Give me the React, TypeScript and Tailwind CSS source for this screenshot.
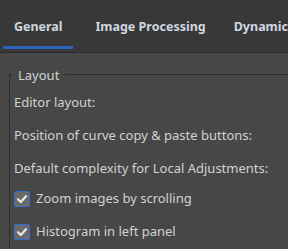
export default function App() {
  const font = { fontFamily: '"Noto Sans", "Open Sans", sans-serif' }
  return (
    <div className="w-[288px] h-[249px] overflow-hidden bg-[#474747] text-[13px] text-[#d2d2d2]" style={font}>
      {/* Tabs */}
      <div className="h-[53px] bg-[#383838] border-b border-[#2c2c2c] text-[12.5px] font-bold text-[#cfd6e0]">
        <div className="flex h-full pt-[5px] pb-[3px]">
          <div className="relative w-[73px] ml-[3px] flex items-center justify-center">
            General
            <div className="absolute left-0 right-0 bottom-0 h-[3px] bg-[#2a62c0]" />
          </div>
          <div className="ml-[22px] flex items-center whitespace-nowrap">Image Processing</div>
          <div className="ml-[28px] flex items-center whitespace-nowrap">Dynamic</div>
        </div>
      </div>

      {/* Layout frame */}
      <div className="relative mt-[21px] ml-[9px] border-l border-t border-[#2e2e2e] pt-[11px] pl-[4px]">
        <div className="absolute -top-[10px] left-[2px] px-[6px] bg-[#474747] leading-[20px]">Layout</div>
        <div className="flex flex-col">
          <div className="h-[33px] flex items-center">Editor layout:</div>
          <div className="h-[33px] flex items-center">Position of curve copy &amp; paste buttons:</div>
          <div className="h-[33px] flex items-center">Default complexity for Local Adjustments:</div>
          {['Zoom images by scrolling', 'Histogram in left panel'].map((label, i) => (
            <div key={label} className={`h-[33px] flex items-center gap-[6px] ${i === 0 ? '-mt-[3px]' : ''}`}>
              <span className="w-[16px] h-[16px] rounded-[2px] border border-[#2f6fd0] bg-[#6a6a6a] flex items-center justify-center">
                <svg width="12" height="12" viewBox="0 0 12 12">
                  <path d="M2 6.2 L4.8 9 L10 3.2" fill="none" stroke="#e8e8e8" strokeWidth="2.2" strokeLinecap="round" strokeLinejoin="round" />
                </svg>
              </span>
              {label}
            </div>
          ))}
        </div>
      </div>
    </div>
  )
}
